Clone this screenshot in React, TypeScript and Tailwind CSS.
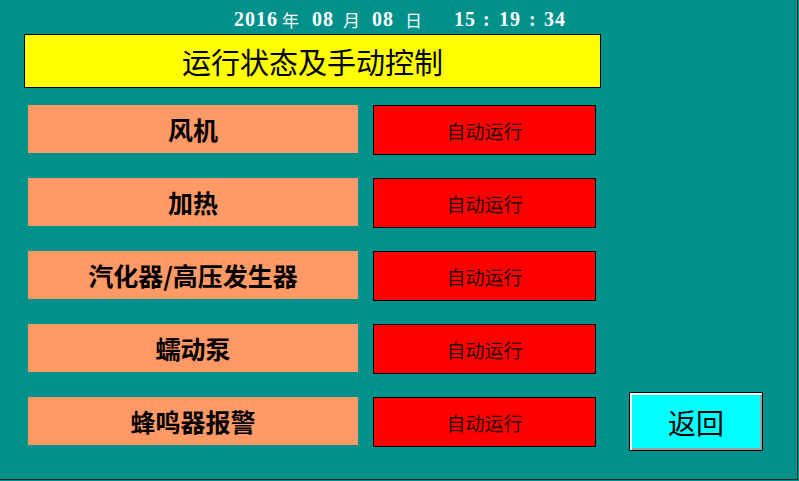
const rows = ['风机', '加热', '汽化器/高压发生器', '蠕动泵', '蜂鸣器报警'];

const cjk = "font-['Noto_Sans_CJK_SC',sans-serif]";

export default function App() {
  return (
    <div className="w-[799px] h-[481px] bg-[#00918a]">
      <div className="w-[798px] h-[480px] border-r border-b border-[#0b2b29] pl-[24px] pt-[8px]">
        {/* Date / time */}
        <div className="h-[22px] pl-[210px] flex items-center text-white font-bold font-['Liberation_Serif',serif] text-[20px] tracking-[1px] leading-none">
          <span className="w-[48px]">2016</span>
          <span className={`w-[30px] text-[17px] font-normal ${cjk}`}>年</span>
          <span className="w-[31px]">08</span>
          <span className={`w-[29px] text-[17px] font-normal ${cjk}`}>月</span>
          <span className="w-[33px]">08</span>
          <span className={`w-[49px] text-[17px] font-normal ${cjk}`}>日</span>
          <span className="w-[29px]">15</span>
          <span className="w-[16px]">:</span>
          <span className="w-[30px]">19</span>
          <span className="w-[15px]">:</span>
          <span>34</span>
        </div>

        {/* Title */}
        <div className="mt-[4px] w-[577px] h-[54px] bg-[#ffff00] border border-black flex items-center justify-center">
          <span className={`text-[29px] text-black leading-none ${cjk}`}>运行状态及手动控制</span>
        </div>

        {/* Rows */}
        <div className="mt-[17px] flex flex-col gap-[23px] pl-[4px]">
          {rows.map((label, i) => (
            <div key={label} className="flex items-start h-[50px]">
              <div className="w-[330px] h-[48px] bg-[#ff9966] flex items-center justify-center">
                <span className={`text-[25px] font-bold text-black leading-none ${cjk}`}>{label}</span>
              </div>
              <div className="ml-[15px] w-[223px] h-[50px] bg-[#ff0000] border border-black flex items-center justify-center">
                <span className={`text-[19px] text-[#2a0000] leading-none ${cjk}`}>自动运行</span>
              </div>
              {i === rows.length - 1 && (
                <button className="ml-[33px] -mt-[5px] w-[134px] h-[59px] bg-[#00ffff] border border-black shadow-[inset_2px_2px_0_#ffffff,inset_-2px_-2px_0_#a0a0a0] flex items-center justify-center">
                  <span className={`text-[28px] text-black leading-none ${cjk}`}>返回</span>
                </button>
              )}
            </div>
          ))}
        </div>
      </div>
    </div>
  );
}
